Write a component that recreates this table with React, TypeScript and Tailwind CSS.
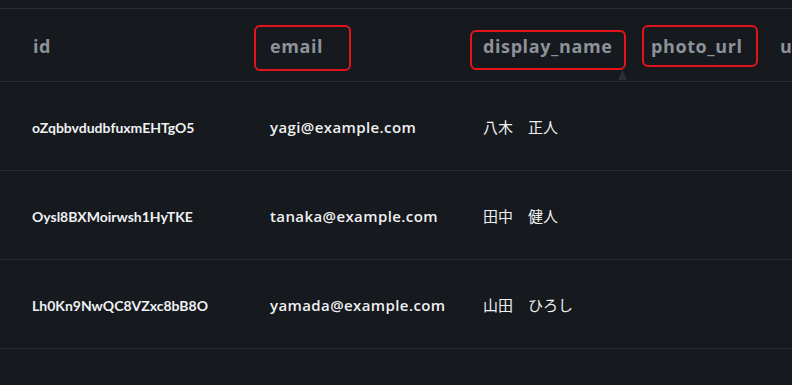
const COLS = 'grid grid-cols-[270px_213px_168px_129px_1fr]'

const rows = [
  { id: 'oZqbbvdudbfuxmEHTgO5', email: 'yagi@example.com', name: '八木　正人' },
  { id: 'Oysl8BXMoirwsh1HyTKE', email: 'tanaka@example.com', name: '田中　健人' },
  { id: 'Lh0Kn9NwQC8VZxc8bB8O', email: 'yamada@example.com', name: '山田　ひろし' },
]

function Mark({ className }: { className: string }) {
  return <div className={`absolute border-2 border-[#e5141b] rounded-[6px] pointer-events-none ${className}`} />
}

export default function App() {
  return (
    <div className="w-[792px] h-[385px] overflow-hidden bg-[#16191d] font-['Open_Sans','Noto_Sans_CJK_JP',sans-serif]">
      <div className="h-[8px]" />
      <div className="border-t border-[#2a2d33]">
        {/* Header */}
        <div className={`${COLS} h-[73px] pt-[2px] items-center border-b border-[#2a2d33] text-[18px] leading-[24px] tracking-[0.6px] font-bold text-[#8c929a] whitespace-nowrap`}>
          <div className="pl-[33px]">id</div>
          <div className="relative">
            email
            <Mark className="-left-[16px] -top-[9px] w-[97px] h-[46px]" />
          </div>
          <div className="relative">
            display_name
            <Mark className="-left-[13px] -top-[4px] w-[156px] h-[40px]" />
            <svg className="absolute left-[134px] top-[36px]" width="11" height="10" viewBox="0 0 11 10">
              <path d="M5.5 0 L10 10 H1 Z" fill="#2c3036" />
            </svg>
          </div>
          <div className="relative">
            photo_url
            <Mark className="-left-[9px] -top-[9px] w-[116px] h-[42px]" />
          </div>
          <div>u</div>
        </div>

        {/* Rows */}
        {rows.map(r => (
          <div key={r.id} className={`${COLS} h-[89px] pt-[3px] items-center border-b border-[#2a2d33] font-semibold text-[#eef0f2] whitespace-nowrap`}>
            <div className="pl-[32px] text-[14px] font-['Lato',sans-serif] font-bold">{r.id}</div>
            <div className="text-[15px] tracking-[0.4px]">{r.email}</div>
            <div className="font-normal text-[15px] font-['Noto_Sans_CJK_JP',sans-serif]">{r.name}</div>
            <div />
            <div />
          </div>
        ))}
      </div>
    </div>
  )
}
